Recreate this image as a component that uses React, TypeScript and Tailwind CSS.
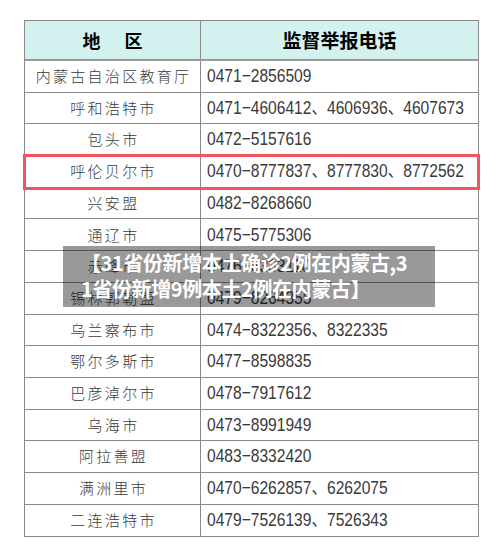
const rows: [string, string][] = [
  ['内蒙古自治区教育厅', '0471−2856509'],
  ['呼和浩特市', '0471−4606412、4606936、4607673'],
  ['包头市', '0472−5157616'],
  ['呼伦贝尔市', '0470−8777837、8777830、8772562'],
  ['兴安盟', '0482−8268660'],
  ['通辽市', '0475−5775306'],
  ['赤峰市', '0476−8333110'],
  ['锡林郭勒盟', '0479−8264355'],
  ['乌兰察布市', '0474−8322356、8322335'],
  ['鄂尔多斯市', '0477−8598835'],
  ['巴彦淖尔市', '0478−7917612'],
  ['乌海市', '0473−8991949'],
  ['阿拉善盟', '0483−8332420'],
  ['满洲里市', '0470−6262857、6262075'],
  ['二连浩特市', '0479−7526139、7526343'],
];

export default function App() {
  return (
    <div className="relative w-[500px] h-[556px] bg-white pt-[20px] pl-[24px] font-['Noto_Sans_CJK_SC',sans-serif]">
      <div className="w-[455px] border border-[#8a8a8a]">
        <div className="grid grid-cols-[176px_1fr] h-[40px] bg-[#d3f1ee] border-b-2 border-[#9a9a9a] font-bold text-black">
          <div className="flex items-center justify-center border-r border-[#8a8a8a] text-[18px] gap-[24px]">
            <span>地</span>
            <span>区</span>
          </div>
          <div className="flex items-center justify-center text-[19px]">监督举报电话</div>
        </div>
        {rows.map(([area, phone], i) => (
          <div
            key={area}
            className={`grid grid-cols-[176px_1fr] h-[31.7px] ${i < rows.length - 1 ? 'border-b border-[#8a8a8a]' : ''} ${i === 3 ? 'relative z-10 outline-[3px] outline-solid outline-[#f2545e] -outline-offset-1' : ''}`}
          >
            <div className="flex items-center justify-center border-r border-[#8a8a8a] text-[15px] font-light text-[#3a3a3a] tracking-[2.3px] pl-[2px]">
              {area}
            </div>
            <div className="flex items-center pl-[6px] overflow-hidden">
              <span className="inline-block origin-left scale-x-[0.82] text-[19px] text-[#3a3a3a] font-['Liberation_Sans','Noto_Sans_CJK_SC',sans-serif] whitespace-nowrap">
                {phone}
              </span>
            </div>
          </div>
        ))}
      </div>
      <div className="absolute left-[63px] top-[246px] w-[372px] h-[61px] bg-black/40 px-[18px] pt-[4px] text-white font-bold text-[20px] leading-[26px] tracking-[-0.4px] break-all">
        【31省份新增本土确诊2例在内蒙古,31省份新增9例本土2例在内蒙古】
      </div>
    </div>
  );
}
